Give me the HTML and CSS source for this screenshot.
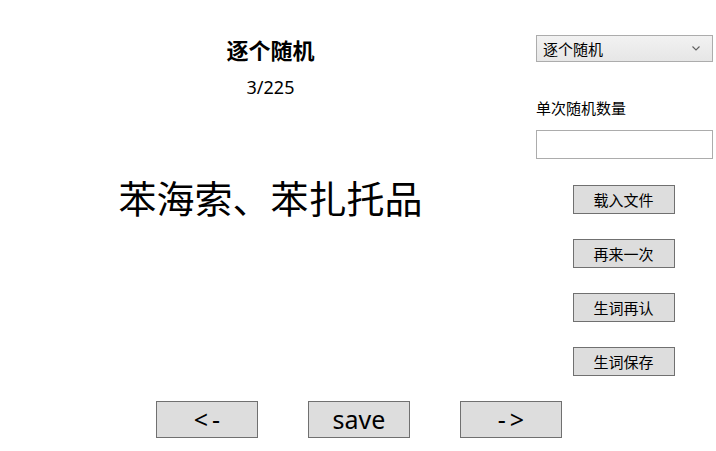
FILE: index.html
```html
<!DOCTYPE html>
<html lang="zh-CN">
<head>
<meta charset="UTF-8" />
<title>逐个随机</title>
<meta name="viewport" content="width=device-width, initial-scale=1" />
<link rel="stylesheet" href="styles.css">
</head>
<body>

<div class="main">
  <!-- 左侧：标题、进度、词条 -->
  <div class="word-panel">
    <div class="mode-title">逐个随机</div>
    <div class="counter">3/225</div>
    <div class="word">苯海索、苯扎托品</div>
  </div>

  <!-- 右侧：设置和操作 -->
  <div class="side-panel">
    <div class="select-wrap">
      <select class="mode-select">
        <option>逐个随机</option>
        <option>批量随机</option>
      </select>
      <svg class="chevron" width="8" height="5" viewBox="0 0 8 5"><path d="M0.5 0.5 L4 4 L7.5 0.5" fill="none" stroke="#606060" stroke-width="1.1"/></svg>
    </div>
    <label class="field-label" for="count">单次随机数量</label>
    <input type="text" id="count" class="count-input">
    <div class="side-buttons">
      <button class="side-btn">载入文件</button>
      <button class="side-btn">再来一次</button>
      <button class="side-btn">生词再认</button>
      <button class="side-btn">生词保存</button>
    </div>
  </div>
</div>

<div class="nav-row">
  <button class="nav-btn arrow">&lt;-</button>
  <button class="nav-btn">save</button>
  <button class="nav-btn arrow">-&gt;</button>
</div>

</body>
</html>
```

FILE: styles.css
```css
body { font-family: "Noto Sans", "Noto Sans CJK SC", sans-serif; background: #fff; color: #000; margin: 0; padding: 0; }
.main { display: flex; padding-top: 35px; }
.word-panel { width: 531px; padding-left: 5px; text-align: center; }
.mode-title { font-family: "Noto Sans CJK SC", sans-serif; font-weight: bold; font-size: 22px; line-height: 28px; }
.counter { font-size: 18px; line-height: 24px; margin-top: 12px; }
.word { font-family: "Noto Sans CJK SC", sans-serif; font-size: 38px; line-height: 50px; margin-top: 73px; }
.side-panel { width: 177px; display: flex; flex-direction: column; }
.select-wrap { position: relative; }
.mode-select { appearance: none; -webkit-appearance: none; width: 177px; height: 27px; margin: 0; padding: 0 0 0 6px; border: 1px solid #acacac; border-radius: 0; background: linear-gradient(#f2f2f2, #e6e6e6); font-family: "Noto Sans CJK SC", sans-serif; font-size: 15px; color: #000; outline: none; }
.chevron { position: absolute; right: 13px; top: 11px; }
.field-label { font-family: "Noto Sans CJK SC", sans-serif; font-size: 15px; line-height: 20px; margin-top: 36px; }
.count-input { box-sizing: border-box; width: 177px; height: 29px; margin-top: 12px; border: 1px solid #acacac; padding: 0 4px; font-size: 14px; outline: none; }
.side-buttons { display: flex; flex-direction: column; align-items: center; gap: 25px; margin-top: 26px; padding-right: 2px; }
.side-btn { box-sizing: border-box; width: 102px; height: 29px; background: #dddddd; border: 1px solid #707070; border-radius: 0; padding: 0; font-family: "Noto Sans CJK SC", sans-serif; font-size: 15px; line-height: 25px; color: #000; }
.nav-row { display: flex; justify-content: center; gap: 50px; margin-top: 25px; padding-left: 2px; }
.nav-btn { box-sizing: border-box; width: 102px; height: 37px; background: #dddddd; border: 1px solid #707070; border-radius: 0; padding: 0; font-family: "Noto Sans", sans-serif; font-size: 25px; line-height: 33px; color: #000; }
.arrow { letter-spacing: 4px; text-indent: 4px; }
```
